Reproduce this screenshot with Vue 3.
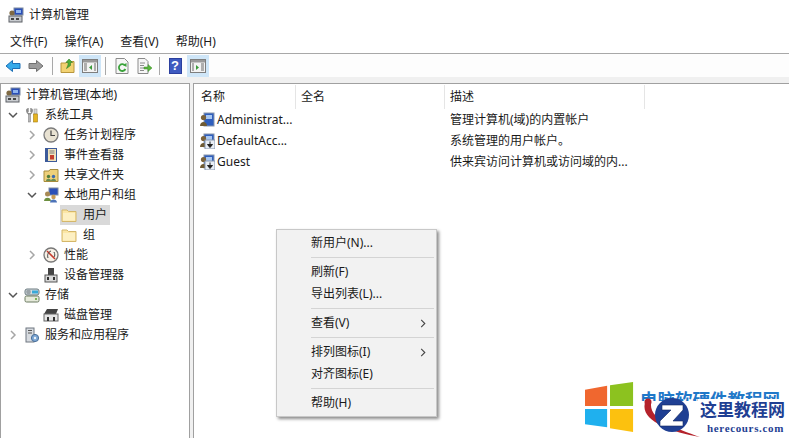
<script setup>
const menus = ['文件(F)', '操作(A)', '查看(V)', '帮助(H)']
const tree = [
  { label: '计算机管理(本地)', icon: 'pc', depth: 0, arrow: '' },
  { label: '系统工具', icon: 'tools', depth: 1, arrow: 'down' },
  { label: '任务计划程序', icon: 'clock', depth: 2, arrow: 'right' },
  { label: '事件查看器', icon: 'log', depth: 2, arrow: 'right' },
  { label: '共享文件夹', icon: 'share', depth: 2, arrow: 'right' },
  { label: '本地用户和组', icon: 'users', depth: 2, arrow: 'down' },
  { label: '用户', icon: 'folder', depth: 3, arrow: '', selected: true },
  { label: '组', icon: 'folder', depth: 3, arrow: '' },
  { label: '性能', icon: 'perf', depth: 2, arrow: 'right' },
  { label: '设备管理器', icon: 'device', depth: 2, arrow: '' },
  { label: '存储', icon: 'storage', depth: 1, arrow: 'down' },
  { label: '磁盘管理', icon: 'disk', depth: 2, arrow: '' },
  { label: '服务和应用程序', icon: 'server', depth: 1, arrow: 'right' },
]
const users = [
  { name: 'Administrat...', desc: '管理计算机(域)的内置帐户', down: false },
  { name: 'DefaultAcc...', desc: '系统管理的用户帐户。', down: true },
  { name: 'Guest', desc: '供来宾访问计算机或访问域的内...', down: true },
]
const menuGroups = [
  [{ t: '新用户(N)...' }],
  [{ t: '刷新(F)' }, { t: '导出列表(L)...' }],
  [{ t: '查看(V)', sub: true }],
  [{ t: '排列图标(I)', sub: true }, { t: '对齐图标(E)' }],
  [{ t: '帮助(H)' }],
]
</script>

<template>
  <div class="app">
    <header class="title">
      <svg class="ic" viewBox="0 0 16 16">
        <rect x="6" y="1" width="9" height="7" fill="#2a4fb8" stroke="#7d8aa0" />
        <rect x="8" y="3" width="5" height="3" fill="#8fb4ee" />
        <circle cx="4" cy="6" r="2.6" fill="#7f6a44" />
        <rect x="1" y="9" width="13" height="6" fill="#c9ccd0" stroke="#5d6166" />
        <rect x="3" y="11" width="3" height="2" fill="#444" />
        <rect x="8" y="11" width="3" height="2" fill="#444" />
      </svg>
      <span>计算机管理</span>
    </header>
    <nav class="menubar">
      <span v-for="m in menus" :key="m">{{ m }}</span>
    </nav>
    <div class="toolbar">
      <button class="tb"><svg viewBox="0 0 16 14"><path d="M1 7 7.5 1.5V4.5H15V9.5H7.5V12.5Z" fill="#35aaea" stroke="#1c6fb6" /></svg></button>
      <button class="tb"><svg viewBox="0 0 16 14"><path d="M15 7 8.5 1.5V4.5H1V9.5H8.5V12.5Z" fill="#9c9c9c" stroke="#707070" /></svg></button>
      <i class="sep"></i>
      <button class="tb tight"><svg viewBox="0 0 16 16"><path d="M1 5H6L7 3.5H14V14.5H1Z" fill="#f2d272" stroke="#b8963c" /><path d="M9 1 12.5 4.5H10.5V7.5L6.5 10.5 8 7V4.5H6Z" fill="#4fae3a" stroke="#2f7f25" stroke-width=".6" /></svg></button>
      <button class="tb on"><svg viewBox="0 0 16 14"><rect x=".5" y=".5" width="15" height="13" fill="#f3f3f3" stroke="#7e7e7e" /><rect x="1" y="1" width="14" height="2.5" fill="#9a9a9a" /><path d="M2 5H5M2 7H5M2 9H5M2 11H5M12 5H14M12 7H14M12 9H14M12 11H14" stroke="#6b6b6b" /><path d="M10 6V11L7 8.5Z" fill="#3b9b3b" /></svg></button>
      <i class="sep wide"></i>
      <button class="tb tight"><svg viewBox="0 0 14 16"><path d="M1 .5H9.5L13 4V15.5H1Z" fill="#f6f6f6" stroke="#8a8a8a" /><path d="M10 7.5A3.4 3.4 0 1 0 10.4 11" fill="none" stroke="#3ba33b" stroke-width="1.8" /><path d="M8 7 11.5 5V9Z" fill="#3ba33b" /></svg></button>
      <button class="tb"><svg viewBox="0 0 16 16"><path d="M2 .5H9L12 3.5V15.5H2Z" fill="#f6f6f6" stroke="#8a8a8a" /><path d="M4 5H9M4 7.5H8M4 10H8M4 12.5H8" stroke="#8a8a8a" /><path d="M8 9H12V6.5L16 10 12 13.5V11H8Z" fill="#59b53d" stroke="#3b8a28" stroke-width=".5" /></svg></button>
      <i class="sep"></i>
      <button class="tb help"><svg viewBox="0 0 13 16"><rect width="13" height="16" fill="#2b3f9e" /><rect x="1" y="1" width="11" height="14" fill="#3e5ac0" /></svg><b>?</b></button>
      <button class="tb on"><svg viewBox="0 0 16 14"><rect x=".5" y=".5" width="15" height="13" fill="#f3f3f3" stroke="#7e7e7e" /><rect x="1" y="1" width="14" height="2.5" fill="#9a9a9a" /><path d="M2 5H4M2 7H4M2 9H4M2 11H4M11 5H14M11 7H14M11 9H14M11 11H14" stroke="#6b6b6b" /><path d="M6 6V11L9 8.5Z" fill="#3b9b3b" /></svg></button>
    </div>

    <main class="panes">
      <aside class="tree">
        <div v-for="n in tree" :key="n.label" class="node" :class="'d' + n.depth">
          <span class="arrow">
            <svg v-if="n.arrow === 'down'" viewBox="0 0 10 10"><path d="M1 3 5 7 9 3" fill="none" stroke="#555" stroke-width="1.5" /></svg>
            <svg v-else-if="n.arrow === 'right'" viewBox="0 0 10 10"><path d="M3 1 7 5 3 9" fill="none" stroke="#a6a6a6" stroke-width="1.5" /></svg>
          </span>
          <span class="nodebody" :class="{ sel: n.selected }">
            <svg class="ic" viewBox="0 0 16 16">
              <template v-if="n.icon === 'pc'">
                <rect x="6" y="1" width="9" height="7" fill="#2a4fb8" stroke="#7d8aa0" />
                <rect x="8" y="3" width="5" height="3" fill="#8fb4ee" />
                <circle cx="4" cy="6" r="2.6" fill="#7f6a44" />
                <rect x="1" y="9" width="13" height="6" fill="#c9ccd0" stroke="#5d6166" />
                <rect x="3" y="11" width="3" height="2" fill="#444" />
                <rect x="8" y="11" width="3" height="2" fill="#444" />
              </template>
              <template v-else-if="n.icon === 'tools'">
                <path d="M4 1V5M7 1V5M3 2C2 5 4 7 5.5 7 7 7 9 5 8 2" fill="none" stroke="#8c8c8c" stroke-width="1.4" />
                <rect x="4.5" y="7" width="2" height="8" fill="#b5b5b5" stroke="#777" stroke-width=".5" />
                <rect x="10" y="2" width="3" height="5" fill="#d5d5d5" stroke="#888" stroke-width=".5" />
                <rect x="9.5" y="7" width="4" height="8" fill="#e6b422" stroke="#a67d10" stroke-width=".6" />
              </template>
              <template v-else-if="n.icon === 'clock'">
                <circle cx="8" cy="8" r="7" fill="#e8e2d2" stroke="#7b7b7b" stroke-width="1.3" />
                <path d="M8 3.5V8.5H12" fill="none" stroke="#444" stroke-width="1.2" />
              </template>
              <template v-else-if="n.icon === 'log'">
                <rect x="2" y="1" width="12" height="14" fill="#3c5a9a" />
                <rect x="5" y="2" width="8" height="12" fill="#efe3bd" />
                <path d="M6.5 4H11.5M6.5 6H11.5" stroke="#7a7a7a" />
                <rect x="7" y="8" width="4" height="4.5" fill="#c5402f" />
              </template>
              <template v-else-if="n.icon === 'share'">
                <path d="M1 4H6L7 2.5H15V14.5H1Z" fill="#eed07b" stroke="#a68c3c" />
                <circle cx="5.5" cy="9.5" r="1.7" fill="#4f7d3a" />
                <circle cx="10.5" cy="9.5" r="1.7" fill="#3c6bb0" />
                <path d="M3 14C3 11 8 11 8 14M8 14C8 11 13 11 13 14" fill="#6a8c52" />
              </template>
              <template v-else-if="n.icon === 'users'">
                <rect x="6" y="1" width="9" height="7" fill="#2a4fb8" stroke="#7d8aa0" />
                <circle cx="4.5" cy="7" r="2.5" fill="#a88a55" />
                <path d="M1 14C1 9.5 8 9.5 8 14Z" fill="#6c8f3f" />
                <circle cx="10.5" cy="10" r="2.2" fill="#c69a55" />
                <path d="M7 15.5C7 11.5 14 11.5 14 15.5Z" fill="#4d73b8" />
              </template>
              <template v-else-if="n.icon === 'folder'">
                <path d="M1 3H6L7.5 4.5H15V14.5H1Z" fill="#fbe6a6" stroke="#d4b76a" />
                <rect x="2" y="6" width="12" height="7.5" fill="#fdf0c3" />
              </template>
              <template v-else-if="n.icon === 'perf'">
                <circle cx="8" cy="8" r="7" fill="#f6f0e6" stroke="#777" stroke-width="1.3" />
                <path d="M4 4 12 12" stroke="#c83a2c" stroke-width="1.6" />
                <path d="M5 11C4 8 5 5 8 4M11 5C12 7 12 9 11 10" fill="none" stroke="#444" />
              </template>
              <template v-else-if="n.icon === 'device'">
                <rect x="5" y="1" width="6" height="7" fill="#444" />
                <rect x="2" y="8" width="12" height="7" fill="#d8d8d8" stroke="#555" />
                <rect x="4" y="10" width="2" height="3" fill="#333" />
                <rect x="10" y="10" width="2" height="3" fill="#333" />
              </template>
              <template v-else-if="n.icon === 'storage'">
                <rect x="1" y="2" width="14" height="6" rx="2" fill="#d6dde0" stroke="#6b7a80" />
                <circle cx="4.5" cy="5" r="2.4" fill="#9aa3a8" />
                <rect x="8" y="3.5" width="6" height="3" fill="#38a9d8" />
                <rect x="1" y="9" width="14" height="6" rx="1.5" fill="#e6eadb" stroke="#6b7a60" />
                <circle cx="12" cy="12" r="1" fill="#5aa02c" />
              </template>
              <template v-else-if="n.icon === 'disk'">
                <path d="M4 2H15L13 7H1Z" fill="#444" />
                <rect x="1" y="7" width="14" height="7" fill="#e6e6e6" stroke="#666" />
                <rect x="4" y="10" width="2" height="4" fill="#333" />
                <rect x="10" y="10" width="2" height="4" fill="#333" />
              </template>
              <template v-else-if="n.icon === 'server'">
                <rect x="2" y="1" width="8" height="14" fill="#d7dbe0" stroke="#6f7780" />
                <path d="M4 3.5H8M4 6H8" stroke="#555" />
                <circle cx="11" cy="11" r="3.6" fill="#7da7d4" stroke="#4a6f99" />
                <circle cx="11" cy="11" r="1.2" fill="#eef4fa" />
              </template>
            </svg>
            <span class="label">{{ n.label }}</span>
          </span>
        </div>
      </aside>

      <section class="list">
        <div class="head">
          <span class="c1">名称</span>
          <span class="c2">全名</span>
          <span class="c3">描述</span>
        </div>
        <div v-for="u in users" :key="u.name" class="row">
          <span class="c1 namecell">
            <svg class="ic" viewBox="0 0 16 16">
              <rect x="5" y="1" width="10" height="13" fill="#2f5fbe" stroke="#8795ab" />
              <rect x="7" y="3" width="6" height="4" fill="#a9c8f2" />
              <circle cx="4.5" cy="5.5" r="2.6" fill="#7b6238" />
              <path d="M1 14C1 8.5 8 8.5 8 14Z" fill="#6e5a34" />
              <template v-if="u.down">
                <rect x="6" y="7" width="10" height="9" fill="#e8eef6" stroke="#8795ab" />
                <path d="M11 8.5V12M8.5 11.5H13.5L11 14.5Z" fill="#222" stroke="#222" />
              </template>
            </svg>
            <span>{{ u.name }}</span>
          </span>
          <span class="c2"></span>
          <span class="c3">{{ u.desc }}</span>
        </div>
      </section>
    </main>

    <div class="ctx">
      <template v-for="(g, i) in menuGroups" :key="i">
        <hr v-if="i > 0" />
        <div v-for="it in g" :key="it.t" class="item">
          <span>{{ it.t }}</span>
          <svg v-if="it.sub" class="sub" viewBox="0 0 6 10"><path d="M1 1 5 5 1 9" fill="none" stroke="#444" stroke-width="1.2" /></svg>
        </div>
      </template>
    </div>

    <div class="mark">
      <svg class="win" viewBox="0 0 52 52">
        <path d="M0 8 23 4V25H0Z" fill="#f0672f" />
        <path d="M26 3.5 50 0V25H26Z" fill="#8cc21f" />
        <path d="M0 28H23V47L0 44Z" fill="#1fb0ee" />
        <path d="M26 28H50V52L26 48Z" fill="#fcc10f" />
      </svg>
      <span class="cut">电脑软硬件教程网</span>
      <svg class="zlogo" viewBox="0 0 60 40">
        <path d="M3 5C-2 22 28 34 58 39 34 30 8 22 9 6Z" fill="#b4222b" />
        <circle cx="6" cy="4" r="3.5" fill="#b4222b" />
        <circle cx="30" cy="17" r="17" fill="#1f3f93" />
        <path d="M20 7H41V12L31 23H41V28H18V23L29 12H20Z" fill="#fff" stroke="#10265e" stroke-width=".6" />
      </svg>
      <span class="brand">这里教程网</span>
      <span class="site">herecours.com</span>
    </div>
  </div>
</template>

<style>
html, body { margin: 0; background: #fff; }
</style>

<style scoped>
.app {
  position: relative;
  width: 789px;
  height: 438px;
  overflow: hidden;
  display: flex;
  flex-direction: column;
  background: #fff;
  color: #1a1a1a;
  font: 12px/16px "Noto Sans", "Noto Sans CJK SC", sans-serif;
}
.ic { width: 16px; height: 16px; flex: none; display: block; }
.title {
  height: 30px;
  flex: none;
  display: flex;
  align-items: center;
  gap: 5px;
  padding-left: 8px;
}
.menubar {
  height: 23px;
  flex: none;
  display: flex;
  align-items: center;
  gap: 17px;
  padding-left: 10px;
  border-bottom: 1px solid #a8a8a8;
  box-sizing: content-box;
}
.toolbar {
  height: 23px;
  flex: none;
  display: flex;
  align-items: center;
  padding-left: 2px;
  background: #fdfdfd;
}
.tb {
  position: relative;
  width: 22px;
  height: 22px;
  margin-right: 1px;
  padding: 0;
  border: 0;
  background: transparent;
  display: flex;
  align-items: center;
  justify-content: center;
}
.tb.tight { margin-right: 0; }
.tb svg { width: 16px; height: 16px; }
.tb.on { background: #cfe6f8; }
.tb.help svg { width: 13px; height: 16px; }
.tb.help b {
  position: absolute;
  inset: 0;
  color: #fff;
  font: bold 13px/22px "Liberation Sans", sans-serif;
  text-align: center;
}
.sep {
  width: 1px;
  height: 18px;
  margin: 0 4px 0 3px;
  background: #a8a8a8;
}
.sep.wide { margin-right: 5px; }
.toolbar .tb:nth-child(2) { margin-right: 2px; }
.panes {
  flex: 1;
  min-height: 0;
  display: flex;
  gap: 3px;
  padding-top: 6px;
  background: #f0f0f0;
}
.tree {
  width: 190px;
  flex: none;
  box-sizing: border-box;
  padding-top: 1px;
  background: #fff;
  border: 1px solid #a0a0a0;
  border-width: 1px 1px 0 1px;
}
.node {
  height: 20px;
  display: flex;
  align-items: center;
  font-size: 12px;
}
.d0 .arrow { width: 3px; }
.d1 { padding-left: 7px; }
.d2 { padding-left: 26px; }
.d3 { padding-left: 59px; }
.arrow { width: 10px; height: 10px; margin-right: 6px; flex: none; display: block; }
.d3 .arrow { width: 0; margin: 0; }
.arrow svg { width: 10px; height: 10px; display: block; }
.nodebody {
  display: flex;
  align-items: center;
  gap: 5px;
  height: 20px;
  padding: 0 3px 0 1px;
}
.d3 .nodebody { gap: 6px; }
.d0 .nodebody, .d1 .nodebody, .d2 .nodebody { padding-left: 0; }
.d0 .arrow { margin-right: 1px; }
.nodebody.sel { background: #d9d9d9; }
.list {
  flex: 1;
  min-width: 0;
  background: #fff;
  border-top: 1px solid #a0a0a0;
  border-left: 1px solid #a0a0a0;
}
.head {
  height: 25px;
  padding-top: 1px;
  box-sizing: border-box;
  display: flex;
  align-items: center;
}
.head span {
  height: 24px;
  line-height: 24px;
  box-sizing: border-box;
  border-right: 1px solid #e5e5e5;
}
.c1 { width: 102px; padding-left: 7px; box-sizing: border-box; flex: none; }
.c2 { width: 149px; padding-left: 5px; box-sizing: border-box; flex: none; }
.c3 { width: 200px; padding-left: 5px; box-sizing: border-box; flex: none; }
.row {
  height: 21px;
  display: flex;
  align-items: center;
  white-space: nowrap;
}
.row .c1 { padding-left: 5px; }
.namecell { display: flex; align-items: center; gap: 2px; }
.ctx {
  position: absolute;
  left: 276px;
  top: 229px;
  width: 161px;
  height: 188px;
  box-sizing: border-box;
  padding: 2px 2px 0 2px;
  background: #f2f2f2;
  border: 1px solid #c8c8c8;
  box-shadow: 2px 2px 3px rgba(0, 0, 0, .45);
}
.item {
  height: 22px;
  padding-left: 32px;
  display: flex;
  align-items: center;
  justify-content: space-between;
}
.sub { width: 6px; height: 9px; margin-right: 8px; }
.ctx hr {
  margin: 3px 0 3px 32px;
  height: 1px;
  border: 0;
  background: #d4d4d4;
}
.mark {
  position: absolute;
  left: 585px;
  top: 380px;
  width: 204px;
  height: 58px;
  overflow: hidden;
  background: #fff;
}
.win { position: absolute; left: 0; top: 2px; width: 50px; height: 50px; }
.cut {
  position: absolute;
  left: 55px;
  top: 8px;
  height: 13px;
  overflow: hidden;
  color: #1f78c8;
  font-size: 17.5px;
  line-height: 22px;
  font-weight: 700;
  white-space: nowrap;
}
.zlogo { position: absolute; left: 57px; top: 18px; width: 60px; height: 40px; }
.brand {
  position: absolute;
  left: 115px;
  top: 19px;
  padding: 0 2px;
  margin-left: -2px;
  background: #fff;
  color: #1f3f93;
  font: 700 17px/20px "Noto Sans CJK SC", serif;
  white-space: nowrap;
}
.site {
  position: absolute;
  left: 122px;
  top: 42px;
  color: #1f3f93;
  font: 700 11px/13px "Liberation Serif", serif;
  letter-spacing: .65px;
  white-space: nowrap;
}
</style>
